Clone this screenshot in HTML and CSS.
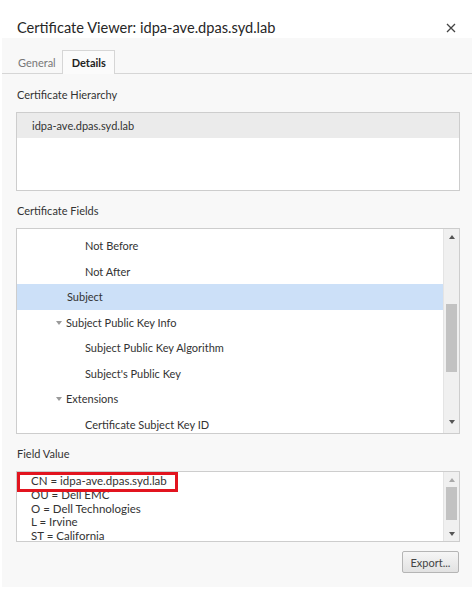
FILE: index.html
```html
<!DOCTYPE html>
<html>
<head>
<meta charset="utf-8">
<link rel="stylesheet" href="styles.css">
</head>
<body>
<div class="titlebar">
  <span class="title">Certificate Viewer: idpa-ave.dpas.syd.lab</span>
  <svg class="close" width="10" height="10" viewBox="0 0 10 10"><path d="M1 1L9 9M9 1L1 9" stroke="#444" stroke-width="1.3"/></svg>
</div>
<div class="panel">
  <div class="tabs">
    <div class="tab">General</div>
    <div class="tab active">Details</div>
  </div>
  <div class="content">
    <div class="label">Certificate Hierarchy</div>
    <div class="box hier">
      <div class="hrow">idpa-ave.dpas.syd.lab</div>
    </div>

    <div class="label">Certificate Fields</div>
    <div class="box fields">
      <div class="list">
        <div class="row l2">Not Before</div>
        <div class="row l2">Not After</div>
        <div class="row l1 sel">Subject</div>
        <div class="row l1 exp"><span class="tri"></span>Subject Public Key Info</div>
        <div class="row l2">Subject Public Key Algorithm</div>
        <div class="row l2">Subject's Public Key</div>
        <div class="row l1 exp"><span class="tri"></span>Extensions</div>
        <div class="row l2">Certificate Subject Key ID</div>
      </div>
      <div class="sbar sb-fields">
        <span class="arr up"></span>
        <span class="thumb"></span>
        <span class="arr down"></span>
      </div>
    </div>

    <div class="label">Field Value</div>
    <div class="box value">
      <div class="vtext">
        <div>CN = idpa-ave.dpas.syd.lab</div>
        <div>OU = Dell EMC</div>
        <div>O = Dell Technologies</div>
        <div>L = Irvine</div>
        <div>ST = California</div>
      </div>
      <div class="highlight"></div>
      <div class="sbar sb-value">
        <span class="arr up light"></span>
        <span class="thumb"></span>
        <span class="arr down"></span>
      </div>
    </div>

    <div class="actions">
      <button class="btn">Export...</button>
    </div>
  </div>
</div>
</body>
</html>
```

FILE: styles.css
```css
* { box-sizing: border-box; }
body {
  margin: 0;
  background: #fff;
  font-family: Lato, "Open Sans", sans-serif;
  color: #333;
  width: 474px;
  height: 590px;
  overflow: hidden;
}
.titlebar {
  height: 38px;
  display: flex;
  align-items: flex-start;
  justify-content: space-between;
  padding: 18px 17px 0 17px;
}
.title {
  font-size: 14.6px;
  line-height: 20px;
  color: #262626;
}
.close { margin-top: 5px; margin-right: 1px; }
.panel {
  margin: 0 2px;
  height: 549px;
  background: #f8f8f8;
}
.tabs {
  height: 36px;
  border-bottom: 1px solid #d6d6d6;
  display: flex;
  align-items: flex-end;
  padding-left: 6px;
}
.tab {
  font-size: 11px;
  line-height: 16px;
  padding: 4px 5px 3px 9px;
  color: #777;
  margin-bottom: -1px;
  border: 1px solid transparent;
  border-bottom: none;
}
.tab.active {
  color: #222;
  font-weight: bold;
  background: #fbfbfb;
  border-color: #d6d6d6;
  padding: 4px 8px 3px 9px;
  height: 24px;
}
.content {
  padding: 13px 12px 0 14px;
}
.label {
  font-size: 11px;
  line-height: 16px;
  padding-left: 1px;
  color: #333;
  margin-bottom: 9px;
}
.box {
  background: #fff;
  border: 1px solid #cdcdcd;
  position: relative;
  overflow: hidden;
  font-size: 11px;
  color: #333;
}
.hier {
  height: 79px;
  margin-bottom: 12px;
}
.hrow {
  height: 25px;
  line-height: 25px;
  background: #ebebeb;
  padding-left: 15px;
}
.fields {
  height: 206px;
  margin-bottom: 12px;
  display: flex;
}
.list {
  flex: 1;
  padding-top: 4px;
}
.row {
  height: 25.5px;
  line-height: 25.5px;
  display: flex;
  align-items: center;
}
.row.l1 { padding-left: 50px; }
.row.l2 { padding-left: 68px; }
.row.exp { padding-left: 39px; }
.row.sel { background: #cce0f8; }
.tri {
  width: 0;
  height: 0;
  border-left: 3.5px solid transparent;
  border-right: 3.5px solid transparent;
  border-top: 4px solid #9a9a9a;
  margin-right: 4px;
  margin-top: 1px;
}
.sbar {
  width: 16px;
  background: #f0f0f0;
  border-left: 1px solid #e4e4e4;
  display: flex;
  flex-direction: column;
  align-items: center;
  flex: none;
}
.arr {
  width: 0;
  height: 0;
  border-left: 3.5px solid transparent;
  border-right: 3.5px solid transparent;
}
.arr.up { border-bottom: 4px solid #555; }
.arr.up.light { border-bottom-color: #a8a8a8; }
.arr.down { border-top: 4px solid #555; }
.thumb {
  width: 11px;
  background: #c2c2c2;
}
.sb-fields .arr.up { margin-top: 6px; }
.sb-fields .thumb { height: 68px; margin-top: 65px; }
.sb-fields .arr.down { margin-top: 48px; }

.value {
  height: 71px;
  margin-bottom: 9px;
  display: flex;
}
.vtext {
  flex: 1;
  padding: 2px 0 0 14px;
  line-height: 13.75px;
  font-size: 11.5px;
}
.sb-value .arr.up { margin-top: 6px; }
.sb-value .thumb { height: 33px; margin-top: 5px; }
.sb-value .arr.down { margin-top: 12px; }
.highlight {
  position: absolute;
  left: 0;
  top: 0;
  width: 161px;
  height: 20px;
  border: 3px solid #e2141f;
}
.actions {
  display: flex;
  justify-content: flex-end;
  padding-right: 1px;
}
.btn {
  font-family: Lato, "Open Sans", sans-serif;
  font-size: 11px;
  color: #444;
  width: 57px;
  height: 22px;
  padding: 0;
  border: 1px solid #b5b5b5;
  border-radius: 2px;
  background: linear-gradient(#f6f6f6, #e2e2e2);
}
```
